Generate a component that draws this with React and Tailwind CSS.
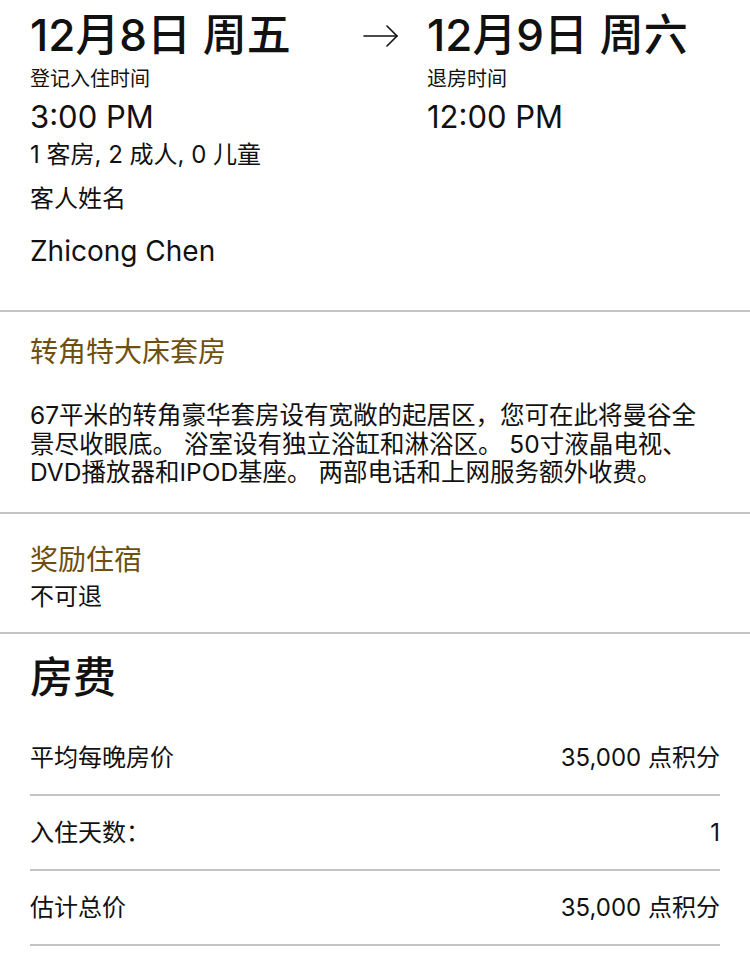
import React from 'react';

const font = { fontFamily: 'Inter, "Noto Sans CJK SC", sans-serif' };

const Arrow = () => (
  <svg width="36" height="22" viewBox="0 0 36 22" fill="none" stroke="#111" strokeWidth="1.6" strokeLinecap="round" strokeLinejoin="round">
    <path d="M1 11 H34" />
    <path d="M24 1 L34 11 L24 21" />
  </svg>
);

const FeeRow = ({ label, value }) => (
  <div className="flex h-[75px] items-center justify-between border-b-2 border-[#c4c4c4] pt-[1px] text-[24px] text-[#111]">
    <span>{label}</span>
    <span>{value}</span>
  </div>
);

const App = () => {
  return (
    <div className="min-h-screen w-[750px] bg-white text-[#111]" style={font}>
      {/* stay summary */}
      <div className="border-b-2 border-[#c4c4c4] pl-[30px] pr-[30px] pt-[9px] pb-[41px]">
        <div className="flex">
          <div className="w-[333px]">
            <div className="text-[44px] font-medium leading-[52px]">12月8日 周五</div>
            <div className="mt-[6px] text-[20px] leading-[25px]">登记入住时间</div>
            <div className="mt-[7px] text-[31px] leading-[36px]">3:00 PM</div>
          </div>
          <div className="flex w-[64px] pt-[16px]">
            <Arrow />
          </div>
          <div className="flex-1">
            <div className="text-[44px] font-medium leading-[52px]">12月9日 周六</div>
            <div className="mt-[6px] text-[20px] leading-[25px]">退房时间</div>
            <div className="mt-[7px] text-[31px] leading-[36px]">12:00 PM</div>
          </div>
        </div>
        <div className="mt-[5px] text-[24px] leading-[30px]">1 客房, 2 成人, 0 儿童</div>
        <div className="mt-[14px] text-[24px] leading-[30px]">客人姓名</div>
        <div className="mt-[19px] text-[28px] leading-[36px]">Zhicong Chen</div>
      </div>

      {/* room */}
      <div className="border-b-2 border-[#c4c4c4] px-[30px] pt-[22px] pb-[25px]">
        <div className="text-[28px] leading-[36px] text-[#6e4f0e]">转角特大床套房</div>
        <p className="mt-[31px] text-[24.5px] leading-[28.5px]">
          67平米的转角豪华套房设有宽敞的起居区，您可在此将曼谷全<br />
          景尽收眼底。 浴室设有独立浴缸和淋浴区。 50寸液晶电视、<br />
          DVD播放器和IPOD基座。 两部电话和上网服务额外收费。
        </p>
      </div>

      {/* rate */}
      <div className="border-b-2 border-[#c4c4c4] px-[30px] pt-[28px] pb-[20px]">
        <div className="text-[28px] leading-[36px] text-[#6e4f0e]">奖励住宿</div>
        <div className="mt-[4px] text-[24px] leading-[30px]">不可退</div>
      </div>

      {/* charges */}
      <div className="px-[30px] pt-[17px]">
        <div className="mb-[18px] text-[43px] font-medium leading-[52px]">房费</div>
        <FeeRow label="平均每晚房价" value="35,000 点积分" />
        <FeeRow label="入住天数：" value="1" />
        <FeeRow label="估计总价" value="35,000 点积分" />
      </div>
    </div>
  );
};

export default App;
